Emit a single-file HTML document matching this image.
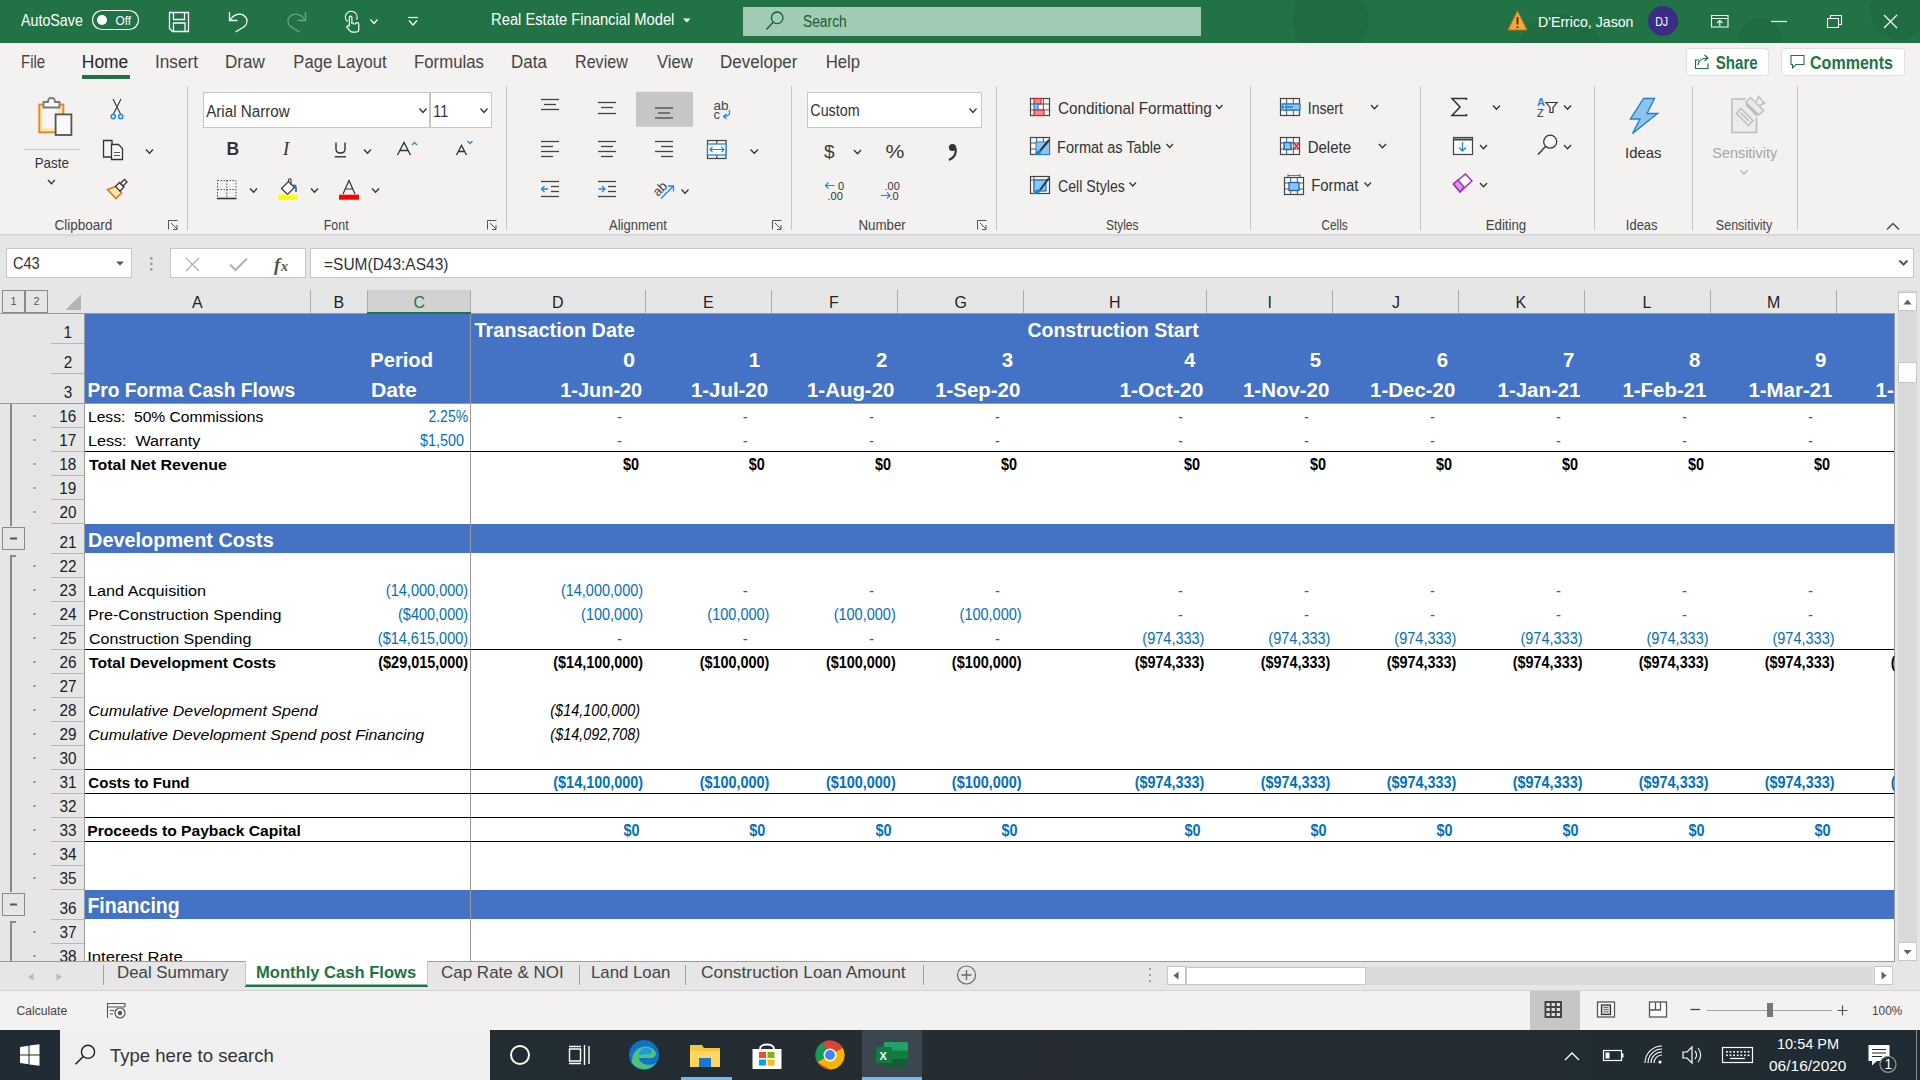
<!DOCTYPE html>
<html><head><meta charset="utf-8"><style>
*{margin:0;padding:0;box-sizing:border-box}
html,body{width:1920px;height:1080px;overflow:hidden;background:#f3f2f1;font-family:"Liberation Sans",sans-serif}
.a{position:absolute}
svg.txt{position:absolute;left:0;top:0;font-family:"Liberation Sans",sans-serif}
svg.txt text{white-space:pre}
svg.ic{position:absolute;left:0;top:0}
</style></head>
<body>
<div class="a" style="left:0px;top:0px;width:1920px;height:43px;background:#217346;"></div>
<div class="a" style="left:743px;top:7px;width:458px;height:29px;background:#a0ccb3;"></div>
<div class="a" style="left:1647.5px;top:6px;width:30px;height:30px;background:#3a2d86;border-radius:50%"></div>
<div class="a" style="left:0px;top:43px;width:1920px;height:191px;background:#f3f2f1;"></div>
<div class="a" style="left:82px;top:75px;width:48px;height:4px;background:#217346;"></div>
<div class="a" style="left:1685.5px;top:47.5px;width:83.5px;height:28.5px;background:#ffffff;border:1px solid #e1dfdd;border-radius:4px"></div>
<div class="a" style="left:1780.5px;top:47.5px;width:124px;height:28.5px;background:#ffffff;border:1px solid #e1dfdd;border-radius:4px"></div>
<div class="a" style="left:0px;top:234px;width:1920px;height:56px;background:#e6e6e6;"></div>
<div class="a" style="left:0px;top:234px;width:1920px;height:3px;background:linear-gradient(#d2d2d2,#e6e6e6);"></div>
<div class="a" style="left:6px;top:248px;width:126px;height:30px;background:#ffffff;border:1px solid #c6c6c6"></div>
<div class="a" style="left:170px;top:248px;width:136px;height:30px;background:#ffffff;border:1px solid #c6c6c6"></div>
<div class="a" style="left:310px;top:248px;width:1604px;height:30px;background:#ffffff;border:1px solid #c6c6c6"></div>
<div class="a" style="left:0px;top:290px;width:1895px;height:24px;background:#e6e6e6;"></div>
<div class="a" style="left:367px;top:290px;width:104px;height:24px;background:#d2d2d2;"></div>
<div class="a" style="left:0px;top:313px;width:85px;height:648px;background:#e6e6e6;"></div>
<div class="a" style="left:85px;top:314px;width:1810px;height:647px;background:#ffffff;"></div>
<div class="a" style="left:85px;top:314px;width:1810px;height:89px;background:#4472c4;"></div>
<div class="a" style="left:85px;top:524px;width:1810px;height:29px;background:#4472c4;"></div>
<div class="a" style="left:85px;top:890px;width:1810px;height:29px;background:#4472c4;"></div>
<div class="a" style="left:1895px;top:290px;width:25px;height:671px;background:#e6e6e6;"></div>
<div class="a" style="left:1898px;top:290px;width:19px;height:671px;background:#dadada;"></div>
<div class="a" style="left:0px;top:961px;width:1920px;height:29px;background:#e6e6e6;"></div>
<div class="a" style="left:0px;top:990px;width:1920px;height:40px;background:#f3f2f1;"></div>
<div class="a" style="left:0px;top:990px;width:1920px;height:1px;background:#d4d4d4;"></div>
<div class="a" style="left:1530px;top:991px;width:50px;height:39px;background:#c8c6c4;"></div>
<div class="a" style="left:0px;top:1030px;width:1920px;height:50px;background:linear-gradient(90deg,#1f2c35,#262c32 55%,#1f2b33);"></div>
<div class="a" style="left:60px;top:1030px;width:430px;height:50px;background:#f0f0f0;"></div>
<div class="a" style="left:862px;top:1030px;width:60px;height:50px;background:#3b4750;"></div>
<div class="a" style="left:310px;top:290px;width:1px;height:23px;background:#ababab;"></div>
<div class="a" style="left:367px;top:290px;width:1px;height:23px;background:#ababab;"></div>
<div class="a" style="left:470px;top:290px;width:1px;height:23px;background:#ababab;"></div>
<div class="a" style="left:645px;top:290px;width:1px;height:23px;background:#ababab;"></div>
<div class="a" style="left:771px;top:290px;width:1px;height:23px;background:#ababab;"></div>
<div class="a" style="left:897px;top:290px;width:1px;height:23px;background:#ababab;"></div>
<div class="a" style="left:1023px;top:290px;width:1px;height:23px;background:#ababab;"></div>
<div class="a" style="left:1206px;top:290px;width:1px;height:23px;background:#ababab;"></div>
<div class="a" style="left:1332px;top:290px;width:1px;height:23px;background:#ababab;"></div>
<div class="a" style="left:1458px;top:290px;width:1px;height:23px;background:#ababab;"></div>
<div class="a" style="left:1584px;top:290px;width:1px;height:23px;background:#ababab;"></div>
<div class="a" style="left:1710px;top:290px;width:1px;height:23px;background:#ababab;"></div>
<div class="a" style="left:1836px;top:290px;width:1px;height:23px;background:#ababab;"></div>
<div class="a" style="left:0px;top:313px;width:1895px;height:1px;background:#9b9b9b;"></div>
<div class="a" style="left:367px;top:312px;width:104px;height:2px;background:#217346;"></div>
<div class="a" style="left:51px;top:343px;width:33px;height:1px;background:#b8b8b8;"></div>
<div class="a" style="left:51px;top:373px;width:33px;height:1px;background:#b8b8b8;"></div>
<div class="a" style="left:51px;top:403px;width:33px;height:1px;background:#b8b8b8;"></div>
<div class="a" style="left:51px;top:427px;width:33px;height:1px;background:#b8b8b8;"></div>
<div class="a" style="left:51px;top:451px;width:33px;height:1px;background:#b8b8b8;"></div>
<div class="a" style="left:51px;top:475px;width:33px;height:1px;background:#b8b8b8;"></div>
<div class="a" style="left:51px;top:499px;width:33px;height:1px;background:#b8b8b8;"></div>
<div class="a" style="left:51px;top:523px;width:33px;height:1px;background:#b8b8b8;"></div>
<div class="a" style="left:51px;top:553px;width:33px;height:1px;background:#b8b8b8;"></div>
<div class="a" style="left:51px;top:577px;width:33px;height:1px;background:#b8b8b8;"></div>
<div class="a" style="left:51px;top:601px;width:33px;height:1px;background:#b8b8b8;"></div>
<div class="a" style="left:51px;top:625px;width:33px;height:1px;background:#b8b8b8;"></div>
<div class="a" style="left:51px;top:649px;width:33px;height:1px;background:#b8b8b8;"></div>
<div class="a" style="left:51px;top:673px;width:33px;height:1px;background:#b8b8b8;"></div>
<div class="a" style="left:51px;top:697px;width:33px;height:1px;background:#b8b8b8;"></div>
<div class="a" style="left:51px;top:721px;width:33px;height:1px;background:#b8b8b8;"></div>
<div class="a" style="left:51px;top:745px;width:33px;height:1px;background:#b8b8b8;"></div>
<div class="a" style="left:51px;top:769px;width:33px;height:1px;background:#b8b8b8;"></div>
<div class="a" style="left:51px;top:793px;width:33px;height:1px;background:#b8b8b8;"></div>
<div class="a" style="left:51px;top:817px;width:33px;height:1px;background:#b8b8b8;"></div>
<div class="a" style="left:51px;top:841px;width:33px;height:1px;background:#b8b8b8;"></div>
<div class="a" style="left:51px;top:865px;width:33px;height:1px;background:#b8b8b8;"></div>
<div class="a" style="left:51px;top:889px;width:33px;height:1px;background:#b8b8b8;"></div>
<div class="a" style="left:51px;top:919px;width:33px;height:1px;background:#b8b8b8;"></div>
<div class="a" style="left:51px;top:943px;width:33px;height:1px;background:#b8b8b8;"></div>
<div class="a" style="left:84px;top:313px;width:1px;height:648px;background:#9b9b9b;"></div>
<div class="a" style="left:0px;top:403px;width:1895px;height:1px;background:#9b9b9b;"></div>
<div class="a" style="left:470px;top:314px;width:1px;height:647px;background:#9b9b9b;"></div>
<div class="a" style="left:85px;top:451px;width:1810px;height:1px;background:#000000;"></div>
<div class="a" style="left:85px;top:649px;width:1810px;height:1px;background:#000000;"></div>
<div class="a" style="left:85px;top:769px;width:1810px;height:1px;background:#000000;"></div>
<div class="a" style="left:85px;top:793px;width:1810px;height:1px;background:#000000;"></div>
<div class="a" style="left:85px;top:817px;width:1810px;height:1px;background:#000000;"></div>
<div class="a" style="left:85px;top:841px;width:1810px;height:1px;background:#000000;"></div>
<div class="a" style="left:1894px;top:314px;width:1px;height:647px;background:#9b9b9b;"></div>
<div class="a" style="left:0px;top:961px;width:1895px;height:1px;background:#9b9b9b;"></div>
<svg class="ic" width="1920" height="1080"><clipPath id="tbclip"><rect x="0" y="0" width="1920" height="43"/></clipPath><g clip-path="url(#tbclip)" opacity="0.05" fill="#000"><circle cx="1330" cy="20" r="38"/><circle cx="1560" cy="60" r="45"/><circle cx="1900" cy="10" r="30"/><circle cx="1760" cy="40" r="22"/></g>
<rect x="92.5" y="10.5" width="46" height="19" rx="9.5" fill="none" stroke="#ffffff" stroke-width="1.2"/>
<circle cx="102" cy="20" r="5" fill="#ffffff"/>
<path d="M169.5,12.5 H188.5 V31.5 H172.5 L169.5,28.5 Z M173.5,12.5 V19.5 H184.5 V12.5 M173.5,31.5 V23 H185 V31.5" fill="none" stroke="#ffffff" stroke-width="1.3"/>
<path d="M229.5,12 V20.5 H237.5 M230.5,19.5 C234,14 241,12.5 245,16.5 C248,19.5 247.5,23.5 244.5,26.5 L235.5,32" fill="none" stroke="#ffffff" stroke-width="1.3"/>
<path d="M305.5,12 V20.5 H297.5 M304.5,19.5 C301,14 294,12.5 290,16.5 C287,19.5 287.5,23.5 290.5,26.5 L299.5,32" fill="none" stroke="#ffffff" stroke-opacity="0.35" stroke-width="1.3"/>
<path d="M347.5,21.5 A5.8,5.8 0 1 1 356.5,19.5" fill="none" stroke="#ffffff" stroke-width="1.2"/>
<path d="M349.3,26.5 V17.5 A1.3,1.3 0 0 1 351.9,17.5 V24 M351.9,22.5 V23 M353.5,22.5 V24.5 M355.4,22.8 V24.5 A1.2,1.2 0 0 1 358.8,24 V29.5 C358.8,31.5 357.5,32.2 355,32.2 H353 C351.5,32.2 350.5,31.5 349.5,30.5 L347,27.5 A1,1 0 0 1 349,26.3" fill="none" stroke="#ffffff" stroke-width="1.2"/>
<path d="M370.5,19.5 L374.0,23.5 L377.5,19.5" fill="none" stroke="#ffffff" stroke-width="1.2"/>
<path d="M408,17.5 H418" stroke="#ffffff" stroke-width="1.2"/>
<path d="M409,20.5 L413.0,25.0 L417,20.5" fill="none" stroke="#ffffff" stroke-width="1.2"/>
<path d="M683,18.5 H690.5 L686.75,22.5 Z" fill="#ffffff"/>
<circle cx="777.2" cy="17.8" r="5.8" fill="none" stroke="#185c37" stroke-width="1.3"/><path d="M773.3,22 L766.5,29.5" stroke="#185c37" stroke-width="1.4"/>
<path d="M1517.5,11 L1527,30 H1508 Z" fill="#f4a640" stroke="#c8701a" stroke-width="1"/><path d="M1517.5,17 V24.5" stroke="#3a2a10" stroke-width="1.8"/><circle cx="1517.5" cy="27.2" r="1" fill="#3a2a10"/>
<path d="M1711.5,15.5 H1728 V27 H1711.5 Z M1711.5,18.5 H1728 M1719.75,26 V20.5 M1717,23 L1719.75,20.5 L1722.5,23" fill="none" stroke="#ffffff" stroke-width="1.1"/>
<path d="M1771,21.5 H1787" stroke="#ffffff" stroke-width="1.2"/>
<path d="M1827.5,18.5 H1838.5 V27.5 H1827.5 Z M1830.5,18.5 V15.5 H1841.5 V24.5 H1838.5" fill="none" stroke="#ffffff" stroke-width="1.1"/>
<path d="M1884,15 L1897,28 M1897,15 L1884,28" stroke="#ffffff" stroke-width="1.3"/>
<path d="M1699,60 H1695.5 V68.5 H1708 V63.5" fill="none" stroke="#217346" stroke-width="1.2"/><path d="M1698,65 C1698.5,60 1702,58 1707.5,58 M1704.5,55 L1708,58 L1704.5,61" fill="none" stroke="#217346" stroke-width="1.2"/>
<path d="M1791,55.5 H1804 V64.5 H1796 L1792.5,68 V64.5 H1791 Z" fill="none" stroke="#217346" stroke-width="1.1"/>
<path d="M187.5,86 V230" stroke="#c8c6c4" stroke-width="1"/>
<path d="M506.5,86 V230" stroke="#c8c6c4" stroke-width="1"/>
<path d="M791.5,86 V230" stroke="#c8c6c4" stroke-width="1"/>
<path d="M996.5,86 V230" stroke="#c8c6c4" stroke-width="1"/>
<path d="M1250.5,86 V230" stroke="#c8c6c4" stroke-width="1"/>
<path d="M1420.5,86 V230" stroke="#c8c6c4" stroke-width="1"/>
<path d="M1594.5,86 V230" stroke="#c8c6c4" stroke-width="1"/>
<path d="M1692.5,86 V230" stroke="#c8c6c4" stroke-width="1"/>
<path d="M1797.5,86 V230" stroke="#c8c6c4" stroke-width="1"/>
<path d="M168.5,229.5 V220.5 H177.5 M171,223 L177,229 M177,225 V229.5 H173" fill="none" stroke="#555" stroke-width="1"/>
<path d="M487.5,229.5 V220.5 H496.5 M490,223 L496,229 M496,225 V229.5 H492" fill="none" stroke="#555" stroke-width="1"/>
<path d="M772.5,229.5 V220.5 H781.5 M775,223 L781,229 M781,225 V229.5 H777" fill="none" stroke="#555" stroke-width="1"/>
<path d="M977.5,229.5 V220.5 H986.5 M980,223 L986,229 M986,225 V229.5 H982" fill="none" stroke="#555" stroke-width="1"/>
<path d="M1887,229.5 L1893,223.5 L1899,229.5" fill="none" stroke="#444" stroke-width="1.3"/>
<rect x="39.3" y="104.6" width="24" height="27.7" fill="#fde7b0" stroke="#e88a2a" stroke-width="2"/><rect x="42.5" y="108" width="14" height="20" fill="#f7f7f7"/>
<path d="M43.5,107.5 V102 H48 C48,99 50,98 51.5,98 C53,98 55,99 55,102 H59.5 V107.5 Z" fill="#f7f7f7" stroke="#7a7a7a" stroke-width="1.8"/>
<rect x="55.6" y="114.4" width="15.8" height="20.6" fill="#fafafa" stroke="#555" stroke-width="1.8"/>
<path d="M24,149.5 H80" stroke="#c8c8c8" stroke-width="1"/>
<path d="M48,180 L51.4,183.8 L54.8,180" fill="none" stroke="#333" stroke-width="1.3"/>
<path d="M113,99 L120.5,114 M121,99 L113.5,114" stroke="#333" stroke-width="1.1"/><circle cx="113.3" cy="116.6" r="2.1" fill="none" stroke="#1e88e5" stroke-width="1.5"/><circle cx="120.7" cy="116.6" r="2.1" fill="none" stroke="#1e88e5" stroke-width="1.5"/>
<path d="M112,146 V140.5 H103.5 V157 H111" fill="none" stroke="#333" stroke-width="1.3"/><path d="M111.5,144.5 H118.5 L122.5,148.5 V159.5 H111.5 Z" fill="#fafafa" stroke="#333" stroke-width="1.3"/><path d="M114,152.5 H120 M114,155.5 H120" stroke="#555" stroke-width="1"/>
<path d="M146,149.5 L149.5,153.3 L153,149.5" fill="none" stroke="#333" stroke-width="1.3"/>
<path d="M107.5,189.5 L117,186 L121.5,193 L116,198.5 Z" fill="#fde7b0" stroke="#e07a10" stroke-width="1.6"/><path d="M115.5,186.5 L119.5,182.5 L124,187 L120,191 Z" fill="#fafafa" stroke="#333" stroke-width="1.3"/><path d="M120.5,183.5 L124.5,179.5 L127,182 L123,186 Z" fill="#fafafa" stroke="#333" stroke-width="1.3"/>
<rect x="203.5" y="92.5" width="226" height="35" fill="#fff" stroke="#c6c6c6"/><rect x="430.5" y="92.5" width="61" height="35" fill="#fff" stroke="#c6c6c6"/>
<path d="M419.5,108.5 L423.0,112.5 L426.5,108.5" fill="none" stroke="#333" stroke-width="1.3"/>
<path d="M480.5,108.5 L484.0,112.5 L487.5,108.5" fill="none" stroke="#333" stroke-width="1.3"/>
<text x="226.5" y="155" font-family="Liberation Sans" font-weight="700" font-size="17.5" fill="#333">B</text>
<text x="283" y="155" font-family="Liberation Serif" font-style="italic" font-size="18.5" fill="#333">I</text>
<path d="M336,142.5 V149 C336,151.5 337.5,153 340.5,153 C343.5,153 345,151.5 345,149 V142.5" fill="none" stroke="#333" stroke-width="1.4"/><path d="M334.7,156.8 H346" stroke="#333" stroke-width="1.4"/>
<path d="M364,149.5 L367.5,153.3 L371,149.5" fill="none" stroke="#333" stroke-width="1.3"/>
<path d="M397.5,155 L404,142.5 L410.5,155 M399.7,150.5 H408.3" fill="none" stroke="#333" stroke-width="1.3"/><path d="M412,145 L414.5,142.5 L417,145" fill="none" stroke="#1e88e5" stroke-width="1.3"/>
<path d="M456.5,155 L461.5,145.5 L466.5,155 M458.3,151.5 H464.7" fill="none" stroke="#333" stroke-width="1.3"/><path d="M467.5,141 L470,143.5 L472.5,141" fill="none" stroke="#1e88e5" stroke-width="1.3"/>
<rect x="217.5" y="180.5" width="18.5" height="18" fill="none" stroke="#555" stroke-width="1" stroke-dasharray="1.5,1.5"/><path d="M226.75,180.5 V198 M217.5,189.5 H236" stroke="#555" stroke-width="1" stroke-dasharray="1.5,1.5"/><path d="M217,198.5 H236.5" stroke="#333" stroke-width="1.6"/>
<path d="M250,188.5 L253.5,192.3 L257,188.5" fill="none" stroke="#333" stroke-width="1.3"/>
<path d="M281.5,188.5 L288.5,181.5 L294.5,187.5 L287.5,194.5 Z" fill="#fafafa" stroke="#333" stroke-width="1.2"/><path d="M288.5,181.5 V180 A1.2,1.2 0 0 1 291,180 V185" fill="none" stroke="#333" stroke-width="1.1"/><path d="M292.5,186 C294.5,184.5 296,185.5 296,188 V192" fill="none" stroke="#1565c0" stroke-width="1.6"/>
<rect x="278" y="194.7" width="20" height="5" fill="#ffff00"/>
<path d="M311,188.5 L314.5,192.3 L318,188.5" fill="none" stroke="#333" stroke-width="1.3"/>
<path d="M343,194 L349,180.5 L355,194 M345.2,189 H352.8" fill="none" stroke="#333" stroke-width="1.2"/><rect x="339" y="194.7" width="20" height="5" fill="#ff0000"/>
<path d="M372,188.5 L375.5,192.3 L379,188.5" fill="none" stroke="#333" stroke-width="1.3"/>
<rect x="636" y="91.8" width="57" height="35" fill="#c8c6c4"/>
<path d="M541.0,99.5 H559.0" stroke="#444" stroke-width="1.3"/>
<path d="M544.0,104.5 H556.0" stroke="#444" stroke-width="1.3"/>
<path d="M541.0,109.5 H559.0" stroke="#444" stroke-width="1.3"/>
<path d="M598.0,102.5 H616.0" stroke="#444" stroke-width="1.3"/>
<path d="M601.0,107.5 H613.0" stroke="#444" stroke-width="1.3"/>
<path d="M598.0,113.5 H616.0" stroke="#444" stroke-width="1.3"/>
<path d="M655.0,108 H673.0" stroke="#444" stroke-width="1.3"/>
<path d="M658.0,113 H670.0" stroke="#444" stroke-width="1.3"/>
<path d="M655.0,118 H673.0" stroke="#444" stroke-width="1.3"/>
<path d="M541,141.5 H559" stroke="#444" stroke-width="1.3"/>
<path d="M541,146.5 H553" stroke="#444" stroke-width="1.3"/>
<path d="M541,151.5 H559" stroke="#444" stroke-width="1.3"/>
<path d="M541,156.5 H553" stroke="#444" stroke-width="1.3"/>
<path d="M598.0,141.5 H616.0" stroke="#444" stroke-width="1.3"/>
<path d="M601.0,146.5 H613.0" stroke="#444" stroke-width="1.3"/>
<path d="M598.0,151.5 H616.0" stroke="#444" stroke-width="1.3"/>
<path d="M601.0,156.5 H613.0" stroke="#444" stroke-width="1.3"/>
<path d="M655,141.5 H673" stroke="#444" stroke-width="1.3"/>
<path d="M661,146.5 H673" stroke="#444" stroke-width="1.3"/>
<path d="M655,151.5 H673" stroke="#444" stroke-width="1.3"/>
<path d="M661,156.5 H673" stroke="#444" stroke-width="1.3"/>
<path d="M541,181.5 H559" stroke="#444" stroke-width="1.3"/>
<path d="M551,186.5 H559" stroke="#444" stroke-width="1.3"/>
<path d="M551,191.5 H559" stroke="#444" stroke-width="1.3"/>
<path d="M541,196.5 H559" stroke="#444" stroke-width="1.3"/>
<path d="M598,181.5 H616" stroke="#444" stroke-width="1.3"/>
<path d="M608,186.5 H616" stroke="#444" stroke-width="1.3"/>
<path d="M608,191.5 H616" stroke="#444" stroke-width="1.3"/>
<path d="M598,196.5 H616" stroke="#444" stroke-width="1.3"/>
<path d="M548,189 H541.5 M544.5,186 L541.5,189 L544.5,192" fill="none" stroke="#1e88e5" stroke-width="1.3"/><path d="M598.5,189 H605 M602,186 L605,189 L602,192" fill="none" stroke="#1e88e5" stroke-width="1.3"/>
<text x="713.5" y="109.5" font-family="Liberation Sans" font-size="13.5" fill="#444">ab</text><text x="713.5" y="119" font-family="Liberation Sans" font-size="13" fill="#444">c</text><path d="M729,110 C731,113 729,116.5 724,116.5 M726.5,114 L723.5,116.5 L726.5,119" fill="none" stroke="#1e88e5" stroke-width="1.3"/>
<rect x="707.5" y="140.5" width="18.5" height="18" fill="none" stroke="#444" stroke-width="1.2"/><path d="M716.75,140.5 V144 M716.75,155 V158.5" stroke="#444" stroke-width="1.2"/><rect x="707.5" y="144" width="18.5" height="11" fill="#fff" stroke="#1e88e5" stroke-width="1.3"/><path d="M710,149.5 H724 M712.5,147 L710,149.5 L712.5,152 M721.5,147 L724,149.5 L721.5,152" fill="none" stroke="#1e88e5" stroke-width="1.2"/>
<path d="M750.5,149.5 L754.25,153.3 L758.0,149.5" fill="none" stroke="#333" stroke-width="1.3"/>
<text x="0" y="0" font-family="Liberation Sans" font-size="13" fill="#444" transform="translate(658,197) rotate(-45)">ab</text><path d="M661,198.5 L673,186.5 M668,186 H673.5 V191.5" fill="none" stroke="#1e88e5" stroke-width="1.3"/>
<path d="M681.5,189.5 L685.0,193.3 L688.5,189.5" fill="none" stroke="#333" stroke-width="1.3"/>
<rect x="807.5" y="92.5" width="174" height="35" fill="#fff" stroke="#c6c6c6"/>
<path d="M969.5,108.5 L973.0,112.5 L976.5,108.5" fill="none" stroke="#333" stroke-width="1.3"/>
<text x="824" y="157.5" font-family="Liberation Sans" font-size="19" fill="#3a3a3a">$</text>
<path d="M854,150 L857.5,153.8 L861,150" fill="none" stroke="#333" stroke-width="1.3"/>
<text transform="translate(885.5,158) scale(1.12,1)" font-family="Liberation Sans" font-size="19" fill="#3a3a3a">%</text>
<circle cx="952.5" cy="147.5" r="3.6" fill="#333"/><path d="M955.5,148 C956.5,153 954.5,157.5 949,160" fill="none" stroke="#333" stroke-width="2.2"/>
<text x="838" y="190" font-family="Liberation Sans" font-size="11" fill="#333">0</text><text x="827.5" y="199.5" font-family="Liberation Sans" font-size="11" fill="#333">.00</text><path d="M834.5,185.5 H825.5 M828.5,182.5 L825.5,185.5 L828.5,188.5" fill="none" stroke="#1e88e5" stroke-width="1.2"/>
<text x="884.5" y="190" font-family="Liberation Sans" font-size="11" fill="#333">.00</text><text x="889.5" y="199.5" font-family="Liberation Sans" font-size="11" fill="#333">.0</text><path d="M881,195.5 H890 M887,192.5 L890,195.5 L887,198.5" fill="none" stroke="#1e88e5" stroke-width="1.2"/>
<rect x="1030.5" y="98.5" width="19" height="17" fill="#fafafa" stroke="#444" stroke-width="1.2"/><path d="M1036.6666666666667,98 V116" stroke="#444" stroke-width="0.9"/><path d="M1043.3333333333333,98 V116" stroke="#444" stroke-width="0.9"/><path d="M1030,104.0 H1050" stroke="#444" stroke-width="0.9"/><path d="M1030,110.0 H1050" stroke="#444" stroke-width="0.9"/>
<rect x="1034" y="98.5" width="7" height="5.5" fill="#f08a94" stroke="#e02030" stroke-width="1.2"/><rect x="1034" y="104" width="4" height="6" fill="#8cc4f0" stroke="#1e7fd4" stroke-width="1.2"/><rect x="1034" y="110" width="10" height="5.5" fill="#f08a94" stroke="#e02030" stroke-width="1.2"/>
<path d="M1216,105 L1219.25,108.5 L1222.5,105" fill="none" stroke="#333" stroke-width="1.2"/>
<rect x="1030.5" y="137.5" width="19" height="17" fill="#fafafa" stroke="#444" stroke-width="1.2"/><path d="M1036.6666666666667,137 V155" stroke="#444" stroke-width="0.9"/><path d="M1043.3333333333333,137 V155" stroke="#444" stroke-width="0.9"/><path d="M1030,143.0 H1050" stroke="#444" stroke-width="0.9"/><path d="M1030,149.0 H1050" stroke="#444" stroke-width="0.9"/>
<rect x="1036" y="142" width="13.5" height="12.5" fill="#8cc4f0" stroke="#1e7fd4" stroke-width="1"/><path d="M1049,140 L1040,151" stroke="#333" stroke-width="2"/><path d="M1040,150 C1037,150 1036,153 1034,155 C1038,155 1041,154 1041.5,151 Z" fill="#1e7fd4"/>
<path d="M1166.5,144 L1169.75,147.5 L1173.0,144" fill="none" stroke="#333" stroke-width="1.2"/>
<rect x="1030.5" y="176.5" width="19" height="17" fill="#fafafa" stroke="#444" stroke-width="1.2"/>
<path d="M1030,180 H1050 M1034,176 V194" stroke="#444" stroke-width="0.9"/><rect x="1034" y="180" width="12" height="11" fill="#8cc4f0" stroke="#1e7fd4" stroke-width="1.3"/><path d="M1049,178 L1040,190" stroke="#333" stroke-width="2"/><path d="M1040,189 C1037,189 1035,192 1033,194 C1037,194 1040.5,193 1041,190 Z" fill="#1e7fd4"/>
<path d="M1129.5,182.5 L1132.75,186.0 L1136.0,182.5" fill="none" stroke="#333" stroke-width="1.2"/>
<rect x="1280.5" y="98.5" width="19" height="17" fill="#fafafa" stroke="#444" stroke-width="1.2"/><path d="M1286.6666666666667,98 V116" stroke="#444" stroke-width="0.9"/><path d="M1293.3333333333333,98 V116" stroke="#444" stroke-width="0.9"/><path d="M1280,104.0 H1300" stroke="#444" stroke-width="0.9"/><path d="M1280,110.0 H1300" stroke="#444" stroke-width="0.9"/>
<rect x="1286" y="104" width="14" height="6" fill="#8cc4f0" stroke="#1e7fd4" stroke-width="1.3"/><path d="M1281,107 H1293 M1285,103 L1281,107 L1285,111" fill="none" stroke="#1e88e5" stroke-width="1.4"/>
<path d="M1371,105 L1374.5,108.8 L1378,105" fill="none" stroke="#333" stroke-width="1.3"/>
<rect x="1280.5" y="137.5" width="19" height="17" fill="#fafafa" stroke="#444" stroke-width="1.2"/><path d="M1286.6666666666667,137 V155" stroke="#444" stroke-width="0.9"/><path d="M1293.3333333333333,137 V155" stroke="#444" stroke-width="0.9"/><path d="M1280,143.0 H1300" stroke="#444" stroke-width="0.9"/><path d="M1280,149.0 H1300" stroke="#444" stroke-width="0.9"/>
<rect x="1284" y="142.5" width="7" height="7" fill="#8cc4f0" stroke="#1565c0" stroke-width="1.4"/><path d="M1293.5,142.5 L1299.5,149.5 M1299.5,142.5 L1293.5,149.5" stroke="#e02030" stroke-width="1.4"/>
<path d="M1379,144 L1382.5,147.8 L1386,144" fill="none" stroke="#333" stroke-width="1.3"/>
<rect x="1284.5" y="177.5" width="19" height="17" fill="#fafafa" stroke="#444" stroke-width="1.2"/><path d="M1290.6666666666667,177 V195" stroke="#444" stroke-width="0.9"/><path d="M1297.3333333333333,177 V195" stroke="#444" stroke-width="0.9"/><path d="M1284,183.0 H1304" stroke="#444" stroke-width="0.9"/><path d="M1284,189.0 H1304" stroke="#444" stroke-width="0.9"/>
<rect x="1289" y="182.5" width="10" height="8" fill="#8cc4f0" stroke="#1565c0" stroke-width="1.3"/><path d="M1288,175.5 H1300 M1288,174 V177 M1300,174 V177" fill="none" stroke="#1e88e5" stroke-width="1.2"/>
<path d="M1364.5,182.5 L1367.75,186.0 L1371.0,182.5" fill="none" stroke="#333" stroke-width="1.2"/>
<path d="M1466.5,100 V98.5 H1452 L1460,107 L1452,115.5 H1466.5 V114" fill="none" stroke="#333" stroke-width="1.5"/>
<path d="M1493,105.5 L1496.5,109.3 L1500,105.5" fill="none" stroke="#333" stroke-width="1.3"/>
<text x="1537" y="105.5" font-family="Liberation Sans" font-weight="700" font-size="11" fill="#1e88e5">A</text><text x="1537" y="116.5" font-family="Liberation Sans" font-size="11" fill="#333">Z</text><path d="M1546,102.5 H1557 L1553,107.5 V112.5 H1550 V107.5 Z" fill="#fafafa" stroke="#333" stroke-width="1.2"/>
<path d="M1564,105.5 L1567.5,109.3 L1571,105.5" fill="none" stroke="#333" stroke-width="1.3"/>
<rect x="1453.5" y="137.5" width="19" height="17" fill="#fafafa" stroke="#444" stroke-width="1.2"/><path d="M1453.5,139.5 H1472.5" stroke="#444" stroke-width="2"/><path d="M1462.5,142 V151 M1459,147.5 L1462.5,151 L1466,147.5" fill="none" stroke="#1e88e5" stroke-width="1.3"/>
<path d="M1480,145 L1483.5,148.8 L1487,145" fill="none" stroke="#333" stroke-width="1.3"/>
<circle cx="1550.2" cy="141.7" r="6.5" fill="#fafafa" stroke="#333" stroke-width="1.3"/><path d="M1545.5,146.5 L1538,154.5" stroke="#333" stroke-width="1.3"/>
<path d="M1564,145 L1567.5,148.8 L1571,145" fill="none" stroke="#333" stroke-width="1.3"/>
<path d="M1453.5,184 L1465.5,174 L1472,181 L1460,192 Z" fill="#fafafa" stroke="#9b2fae" stroke-width="1.4"/><path d="M1453.5,184 L1458,180 L1464,187 L1460,192 Z" fill="#d79ce0" stroke="#9b2fae" stroke-width="1.4"/>
<path d="M1480,183 L1483.5,186.8 L1487,183" fill="none" stroke="#333" stroke-width="1.3"/>
<path d="M1643.5,98.5 H1654.5 L1647,113.5 H1657.5 L1632.5,133.5 L1640,119 H1630.5 Z" fill="#8cc4f0" stroke="#1e7fd4" stroke-width="1.4" stroke-linejoin="miter"/>
<path d="M1745.5,99 H1732 V132.5 H1756.5 V117.5" fill="#ececec" stroke="#bdbdbd" stroke-width="1.6"/>
<path d="M1736.5,113.5 L1741,108.5 L1753,120.5 L1748.5,125.5 Z" fill="#ececec" stroke="#bdbdbd" stroke-width="1.5"/><path d="M1740.5,112.5 L1749,121" stroke="#bdbdbd" stroke-width="1.5"/>
<path d="M1746,102.5 L1750.5,97.5 L1763.5,110.5 L1759,115 Z" fill="#ececec" stroke="#bdbdbd" stroke-width="1.5"/><path d="M1746.5,104.5 L1757.5,115.5" stroke="#bdbdbd" stroke-width="2.5"/><path d="M1756,102.5 L1758.5,96.5 L1764.5,103 L1759.5,105.5" fill="#ececec" stroke="#bdbdbd" stroke-width="1.4"/>
<path d="M1740.5,170.5 L1744.0,174.0 L1747.5,170.5" fill="none" stroke="#b0b0b0" stroke-width="1.2"/>
<path d="M116,261.5 H124 L120,265.5 Z" fill="#555"/>
<rect x="150" y="257" width="2.5" height="2.5" fill="#a0a0a0"/>
<rect x="150" y="262.5" width="2.5" height="2.5" fill="#a0a0a0"/>
<rect x="150" y="268" width="2.5" height="2.5" fill="#a0a0a0"/>
<path d="M186,258 L199,271 M199,258 L186,271" stroke="#b0b0b0" stroke-width="1.3"/>
<path d="M230,264.5 L235.5,270 L247,258.5" fill="none" stroke="#b0b0b0" stroke-width="2"/>
<text x="274" y="271" font-family="Liberation Serif" font-style="italic" font-weight="700" font-size="19" fill="#555">f</text><text x="281" y="271" font-family="Liberation Serif" font-style="italic" font-weight="700" font-size="14" fill="#555">x</text>
<path d="M1899.5,260.5 L1903.5,264.5 L1907.5,260.5" fill="none" stroke="#555" stroke-width="2"/>
<rect x="2.5" y="290.5" width="22" height="22" fill="none" stroke="#8a8a8a"/><rect x="25.5" y="290.5" width="22" height="22" fill="none" stroke="#8a8a8a"/>
<path d="M81,294.5 V310 H65.5 Z" fill="#b4b4b4"/>
<path d="M11,404 V526" stroke="#8a8a8a" stroke-width="2"/><rect x="2.5" y="527.5" width="22" height="22" fill="#e6e6e6" stroke="#8a8a8a"/><path d="M10,538.5 H17" stroke="#555" stroke-width="2"/>
<path d="M16,556 H11 V892" fill="none" stroke="#8a8a8a" stroke-width="2"/><rect x="2.5" y="893.5" width="22" height="22" fill="#e6e6e6" stroke="#8a8a8a"/><path d="M10,904.5 H17" stroke="#555" stroke-width="2"/>
<path d="M16,922 H11 V961" fill="none" stroke="#8a8a8a" stroke-width="2"/>
<rect x="33.5" y="415" width="2" height="2" fill="#8a8a8a"/>
<rect x="33.5" y="439" width="2" height="2" fill="#8a8a8a"/>
<rect x="33.5" y="463" width="2" height="2" fill="#8a8a8a"/>
<rect x="33.5" y="487" width="2" height="2" fill="#8a8a8a"/>
<rect x="33.5" y="511" width="2" height="2" fill="#8a8a8a"/>
<rect x="33.5" y="565" width="2" height="2" fill="#8a8a8a"/>
<rect x="33.5" y="589" width="2" height="2" fill="#8a8a8a"/>
<rect x="33.5" y="613" width="2" height="2" fill="#8a8a8a"/>
<rect x="33.5" y="637" width="2" height="2" fill="#8a8a8a"/>
<rect x="33.5" y="661" width="2" height="2" fill="#8a8a8a"/>
<rect x="33.5" y="685" width="2" height="2" fill="#8a8a8a"/>
<rect x="33.5" y="709" width="2" height="2" fill="#8a8a8a"/>
<rect x="33.5" y="733" width="2" height="2" fill="#8a8a8a"/>
<rect x="33.5" y="757" width="2" height="2" fill="#8a8a8a"/>
<rect x="33.5" y="781" width="2" height="2" fill="#8a8a8a"/>
<rect x="33.5" y="805" width="2" height="2" fill="#8a8a8a"/>
<rect x="33.5" y="829" width="2" height="2" fill="#8a8a8a"/>
<rect x="33.5" y="853" width="2" height="2" fill="#8a8a8a"/>
<rect x="33.5" y="877" width="2" height="2" fill="#8a8a8a"/>
<rect x="33.5" y="931" width="2" height="2" fill="#8a8a8a"/>
<rect x="33.5" y="955" width="2" height="2" fill="#8a8a8a"/>
<rect x="1898.5" y="292.5" width="18" height="18" fill="#fff" stroke="#c6c6c6"/><path d="M1903.5,304.5 H1911.5 L1907.5,299.5 Z" fill="#606060"/>
<rect x="1898.5" y="362.5" width="18" height="20" fill="#fff" stroke="#c6c6c6"/>
<rect x="1898.5" y="942.5" width="18" height="18" fill="#fff" stroke="#c6c6c6"/><path d="M1903.5,950 H1911.5 L1907.5,954.5 Z" fill="#606060"/>
<path d="M28,977 L33.5,973.5 V980.5 Z" fill="#b8b8b8"/><path d="M62,977 L56.5,973.5 V980.5 Z" fill="#b8b8b8"/>
<path d="M103.5,965 V985" stroke="#a0a0a0"/>
<path d="M579.5,965 V985" stroke="#a0a0a0"/>
<path d="M685.5,965 V985" stroke="#a0a0a0"/>
<path d="M923.5,965 V985" stroke="#a0a0a0"/>
<rect x="245" y="961" width="183" height="26" fill="#ffffff"/><rect x="245" y="984.5" width="183" height="2.5" fill="#217346"/><path d="M245.5,961 V986 M427.5,961 V986" stroke="#c6c6c6"/>
<circle cx="966.5" cy="975" r="9" fill="none" stroke="#666" stroke-width="1.2"/><path d="M961.5,975 H971.5 M966.5,970 V980" stroke="#666" stroke-width="1.3"/>
<rect x="1149" y="968" width="2" height="2" fill="#a0a0a0"/>
<rect x="1149" y="974" width="2" height="2" fill="#a0a0a0"/>
<rect x="1149" y="980" width="2" height="2" fill="#a0a0a0"/>
<rect x="1167" y="966.5" width="706" height="18.5" fill="#dadada"/>
<rect x="1167.5" y="966.5" width="18" height="18" fill="#fff" stroke="#c6c6c6"/><path d="M1173.5,975.5 L1178.5,971.5 V979.5 Z" fill="#606060"/>
<rect x="1186.5" y="967.5" width="179" height="17" fill="#fff" stroke="#c6c6c6"/>
<rect x="1874.5" y="966.5" width="18" height="18" fill="#fff" stroke="#c6c6c6"/><path d="M1886.5,975.5 L1881.5,971.5 V979.5 Z" fill="#606060"/>
<path d="M107.5,1018 V1003.5 H125 V1007 M107.5,1007 H125 M110,1010.5 H114 M110,1014 H113" fill="none" stroke="#555" stroke-width="1.1"/><circle cx="120" cy="1013" r="5" fill="#f3f2f1" stroke="#555" stroke-width="1.2"/><circle cx="120" cy="1013" r="2.2" fill="#555"/>
<rect x="1545.5" y="1002" width="15.5" height="15" fill="#e0e0e0" stroke="#444" stroke-width="2"/><path d="M1550.7,1002 V1017 M1555.8,1002 V1017 M1545.5,1007 H1561 M1545.5,1012 H1561" stroke="#444" stroke-width="1.8"/>
<rect x="1597.5" y="1002" width="17" height="15" fill="#fff" stroke="#555" stroke-width="1.3"/><rect x="1601.5" y="1005" width="9" height="9.5" fill="#d8d8d8" stroke="#333" stroke-width="1.3"/><path d="M1603.5,1007.5 H1608.5 M1603.5,1009.5 H1608.5 M1603.5,1011.8 H1608.5" stroke="#555" stroke-width="0.8"/>
<rect x="1649.5" y="1002" width="17" height="15" fill="#fff" stroke="#555" stroke-width="1.3"/><path d="M1655.5,1002 V1010 H1649.5 M1660.5,1002 V1010 H1655.5" fill="none" stroke="#555" stroke-width="1.3"/>
<path d="M1690.5,1009.5 H1700" stroke="#444" stroke-width="1.3"/><path d="M1707,1010.5 H1832" stroke="#a0a0a0" stroke-width="1"/><rect x="1767" y="1003" width="6" height="14" fill="#777"/><path d="M1837.5,1010.5 H1847.5 M1842.5,1005.5 V1015.5" stroke="#555" stroke-width="1.2"/>
<path d="M20,1047 L28.5,1045.8 V1054.5 H20 Z M29.5,1045.6 L39.5,1044.2 V1054.5 H29.5 Z M20,1055.5 H28.5 V1064.2 L20,1063 Z M29.5,1055.5 H39.5 V1065.8 L29.5,1064.4 Z" fill="#fff"/>
<circle cx="88" cy="1051.8" r="6.6" fill="none" stroke="#222" stroke-width="1.4"/><path d="M83.3,1056.5 L75.5,1064.3" stroke="#222" stroke-width="1.6"/>
<circle cx="520" cy="1055" r="9" fill="none" stroke="#fff" stroke-width="2"/>
<path d="M569,1046.5 H581 M569,1063.5 H581 M569.5,1049 V1061 H580.5 V1049 Z M584.5,1045 V1065 M589,1046 V1064" fill="none" stroke="#fff" stroke-width="1.4"/>
<circle cx="644" cy="1055" r="15" fill="#0c73c8"/><path d="M632,1060 C633,1048 645,1043 653,1049 C657,1052 657,1057 652,1058 H639 C640,1064 648,1067 656,1063 C652,1069 643,1071 637,1067 C633,1065 631,1062 632,1060 Z" fill="#5fd06a" opacity="0.85"/><path d="M639,1055 C639,1049 645,1046 650,1049 C653,1051 652,1054 649,1054 Z" fill="#1a9ae0"/>
<path d="M690,1045 H702 L704,1048 H720 V1067 H690 Z" fill="#f4c542"/><path d="M690,1051 H720 V1067 H690 Z" fill="#ffd760"/><rect x="699" y="1058" width="12" height="9" fill="#1976d2"/><rect x="681" y="1077" width="51" height="3" fill="#76b9ed"/>
<path d="M752.5,1049 H781.5 V1069 H752.5 Z" fill="#fff"/><path d="M760,1049 C760,1043 774,1043 774,1049" fill="none" stroke="#fff" stroke-width="2"/><rect x="759" y="1052" width="7" height="6" fill="#f25022"/><rect x="767.5" y="1052" width="7" height="6" fill="#7fba00"/><rect x="759" y="1059.5" width="7" height="6" fill="#00a4ef"/><rect x="767.5" y="1059.5" width="7" height="6" fill="#ffb900"/>
<circle cx="830" cy="1055" r="14.5" fill="#db4437"/><path d="M830,1055 L817.5,1062.3 A14.5,14.5 0 0 1 822.75,1042.4 Z" fill="#0f9d58"/><path d="M830,1055 L842.5,1047.7 A14.5,14.5 0 0 1 830,1069.5 L817.5,1062.3 Z" fill="#f4b400"/><path d="M830,1055 L842.5,1047.7 A14.5,14.5 0 0 0 822.75,1042.4 Z" fill="#db4437"/><circle cx="830" cy="1055" r="6.5" fill="#fff"/><circle cx="830" cy="1055" r="5" fill="#4285f4"/>
<rect x="884" y="1042" width="24" height="26" rx="1.5" fill="#21a366"/><rect x="884" y="1050.5" width="24" height="8.5" fill="#107c41"/><rect x="884" y="1059" width="24" height="9" fill="#185c37"/><rect x="876" y="1047" width="16" height="16" rx="1.5" fill="#107c41"/><text x="879.5" y="1059.5" font-family="Liberation Sans" font-weight="700" font-size="11" fill="#fff">X</text><rect x="862" y="1077" width="60" height="3" fill="#76b9ed"/>
<path d="M1565,1060 L1572,1053 L1579,1060" fill="none" stroke="#fff" stroke-width="1.4"/>
<rect x="1603.5" y="1050.5" width="18" height="10" fill="none" stroke="#fff" stroke-width="1.2"/><rect x="1621.5" y="1053.5" width="2" height="4" fill="#fff"/><rect x="1605.5" y="1052.5" width="4" height="6" fill="#fff"/>
<path d="M1645,1063 A17,17 0 0 1 1662,1046 M1648,1063 A14,14 0 0 1 1662,1049 M1651,1063 A11,11 0 0 1 1662,1052 M1654,1063 A8,8 0 0 1 1662,1055" fill="none" stroke="#fff" stroke-width="1.1"/><circle cx="1660" cy="1062" r="1.6" fill="#fff"/>
<path d="M1683,1052 H1687 L1692,1047 V1063 L1687,1058 H1683 Z" fill="none" stroke="#fff" stroke-width="1.2"/><path d="M1695,1051 C1697,1053 1697,1057 1695,1059 M1698,1048 C1701.5,1052 1701.5,1058 1698,1062" fill="none" stroke="#fff" stroke-width="1.1"/>
<rect x="1722.5" y="1047.5" width="30" height="15" fill="none" stroke="#fff" stroke-width="1.2"/>
<rect x="1726.0" y="1051" width="1.8" height="1.6" fill="#fff"/>
<rect x="1729.6" y="1051" width="1.8" height="1.6" fill="#fff"/>
<rect x="1733.2" y="1051" width="1.8" height="1.6" fill="#fff"/>
<rect x="1736.8" y="1051" width="1.8" height="1.6" fill="#fff"/>
<rect x="1740.4" y="1051" width="1.8" height="1.6" fill="#fff"/>
<rect x="1744.0" y="1051" width="1.8" height="1.6" fill="#fff"/>
<rect x="1747.6" y="1051" width="1.8" height="1.6" fill="#fff"/>
<rect x="1726.0" y="1054.5" width="1.8" height="1.6" fill="#fff"/>
<rect x="1729.6" y="1054.5" width="1.8" height="1.6" fill="#fff"/>
<rect x="1733.2" y="1054.5" width="1.8" height="1.6" fill="#fff"/>
<rect x="1736.8" y="1054.5" width="1.8" height="1.6" fill="#fff"/>
<rect x="1740.4" y="1054.5" width="1.8" height="1.6" fill="#fff"/>
<rect x="1744.0" y="1054.5" width="1.8" height="1.6" fill="#fff"/>
<rect x="1747.6" y="1054.5" width="1.8" height="1.6" fill="#fff"/>
<path d="M1730,1058.5 H1745" stroke="#fff" stroke-width="1.3"/>
<path d="M1868.5,1045 H1889.5 V1061 H1877 L1872,1065.5 V1061 H1868.5 Z" fill="#fff"/><path d="M1872,1049.5 H1886 M1872,1053 H1886 M1872,1056.5 H1882" stroke="#1e2b34" stroke-width="1.1"/><circle cx="1888" cy="1064.3" r="8" fill="#1e2b34" stroke="#8a9196" stroke-width="1.3"/>
<path d="M1916.5,1030 V1080" stroke="#8a9196" stroke-width="1"/></svg>
<svg class="txt" width="1920" height="1080" viewBox="0 0 1920 1080"><defs><clipPath id="clipN"><rect x="1836" y="300" width="58.5" height="600"/></clipPath><clipPath id="clipRH"><rect x="0" y="314" width="85" height="647"/></clipPath><clipPath id="clipGrid"><rect x="85" y="314" width="1810" height="647"/></clipPath></defs><g><text transform="translate(21.00,26.00) scale(0.8953,1)" font-size="15.94" font-weight="400" fill="#ffffff">AutoSave</text></g>
<g><text transform="translate(115.60,25.00) scale(0.9075,1)" font-size="13.04" font-weight="400" fill="#ffffff">Off</text></g>
<g><text transform="translate(491.06,25.00) scale(0.9417,1)" font-size="15.65" font-weight="400" fill="#ffffff">Real Estate Financial Model</text></g>
<g><text transform="translate(803.00,26.90) scale(0.8735,1)" font-size="15.80" font-weight="400" fill="#185c37">Search</text></g>
<g><text transform="translate(1538.08,27.30) scale(0.9206,1)" font-size="15.36" font-weight="400" fill="#ffffff">D&#x27;Errico, Jason</text></g>
<g><text transform="translate(1655.14,26.00) scale(0.8645,1)" font-size="12.32" font-weight="400" fill="#ffffff">DJ</text></g>
<g><text transform="translate(21.01,68.00) scale(0.8446,1)" font-size="17.68" font-weight="400" fill="#444444">File</text></g>
<g><text transform="translate(155.03,68.00) scale(0.9703,1)" font-size="17.68" font-weight="400" fill="#444444">Insert</text></g>
<g><text transform="translate(225.04,68.00) scale(0.9636,1)" font-size="17.68" font-weight="400" fill="#444444">Draw</text></g>
<g><text transform="translate(293.36,68.00) scale(0.9397,1)" font-size="17.68" font-weight="400" fill="#444444">Page Layout</text></g>
<g><text transform="translate(414.05,68.00) scale(0.9477,1)" font-size="17.68" font-weight="400" fill="#444444">Formulas</text></g>
<g><text transform="translate(511.04,68.00) scale(0.9589,1)" font-size="17.68" font-weight="400" fill="#444444">Data</text></g>
<g><text transform="translate(575.09,68.00) scale(0.9094,1)" font-size="17.68" font-weight="400" fill="#444444">Review</text></g>
<g><text transform="translate(657.00,68.00) scale(0.9419,1)" font-size="17.68" font-weight="400" fill="#444444">View</text></g>
<g><text transform="translate(720.04,68.00) scale(0.9603,1)" font-size="17.68" font-weight="400" fill="#444444">Developer</text></g>
<g><text transform="translate(825.65,68.00) scale(0.9489,1)" font-size="17.68" font-weight="400" fill="#444444">Help</text></g>
<g><text transform="translate(81.81,68.00) scale(0.9868,1)" font-size="17.68" font-weight="400" fill="#262626">Home</text></g>
<g><text transform="translate(1715.80,68.70) scale(0.8436,1)" font-size="17.86" font-weight="700" fill="#217346">Share</text></g>
<g><text transform="translate(1810.00,68.70) scale(0.8994,1)" font-size="17.86" font-weight="700" fill="#217346">Comments</text></g>
<g><text transform="translate(34.70,167.60) scale(0.8961,1)" font-size="14.93" font-weight="400" fill="#333333">Paste</text></g>
<g><text transform="translate(54.40,230.00) scale(0.9747,1)" font-size="13.91" font-weight="400" fill="#444444">Clipboard</text></g>
<g><text transform="translate(206.20,116.50) scale(0.9271,1)" font-size="16.38" font-weight="400" fill="#333333">Arial Narrow</text></g>
<g><text transform="translate(433.32,116.50) scale(0.8751,1)" font-size="16.38" font-weight="400" fill="#333333">11</text></g>
<g><text transform="translate(323.81,230.00) scale(0.8901,1)" font-size="13.91" font-weight="400" fill="#444444">Font</text></g>
<g><text transform="translate(609.00,230.00) scale(0.9359,1)" font-size="13.91" font-weight="400" fill="#444444">Alignment</text></g>
<g><text transform="translate(810.30,116.30) scale(0.8987,1)" font-size="15.94" font-weight="400" fill="#333333">Custom</text></g>
<g><text transform="translate(858.44,230.00) scale(0.9585,1)" font-size="13.91" font-weight="400" fill="#444444">Number</text></g>
<g><text transform="translate(1058.00,114.00) scale(0.9594,1)" font-size="15.94" font-weight="400" fill="#333333">Conditional Formatting</text></g>
<g><text transform="translate(1057.09,153.00) scale(0.9127,1)" font-size="15.94" font-weight="400" fill="#333333">Format as Table</text></g>
<g><text transform="translate(1058.00,191.90) scale(0.8896,1)" font-size="15.94" font-weight="400" fill="#333333">Cell Styles</text></g>
<g><text transform="translate(1106.00,230.00) scale(0.8545,1)" font-size="13.91" font-weight="400" fill="#444444">Styles</text></g>
<g><text transform="translate(1307.71,114.10) scale(0.8851,1)" font-size="15.94" font-weight="400" fill="#333333">Insert</text></g>
<g><text transform="translate(1307.66,152.50) scale(0.9424,1)" font-size="15.94" font-weight="400" fill="#333333">Delete</text></g>
<g><text transform="translate(1311.16,191.20) scale(0.9351,1)" font-size="15.94" font-weight="400" fill="#333333">Format</text></g>
<g><text transform="translate(1321.50,230.00) scale(0.8464,1)" font-size="13.91" font-weight="400" fill="#444444">Cells</text></g>
<g><text transform="translate(1485.64,230.00) scale(0.9562,1)" font-size="13.91" font-weight="400" fill="#444444">Editing</text></g>
<g><text transform="translate(1625.11,158.20) scale(0.9882,1)" font-size="15.07" font-weight="400" fill="#333333">Ideas</text></g>
<g><text transform="translate(1625.87,230.00) scale(0.9285,1)" font-size="13.91" font-weight="400" fill="#444444">Ideas</text></g>
<g><text transform="translate(1712.30,158.20) scale(0.9565,1)" font-size="15.07" font-weight="400" fill="#a6a6a6">Sensitivity</text></g>
<g><text transform="translate(1715.80,230.00) scale(0.9019,1)" font-size="13.91" font-weight="400" fill="#444444">Sensitivity</text></g>
<g><text transform="translate(13.00,269.00) scale(0.9312,1)" font-size="15.65" font-weight="400" fill="#333333">C43</text></g>
<g><text transform="translate(324.00,269.50) scale(0.9550,1)" font-size="16.23" font-weight="400" fill="#333333">=SUM(D43:AS43)</text></g>
<g><text transform="translate(192.00,308.00) scale(1.0000,1)" font-size="15.94" font-weight="400" fill="#222222">A</text></g>
<g><text transform="translate(333.50,308.00) scale(1.0000,1)" font-size="15.94" font-weight="400" fill="#222222">B</text></g>
<g><text transform="translate(413.50,308.00) scale(1.0000,1)" font-size="15.94" font-weight="400" fill="#217346">C</text></g>
<g><text transform="translate(552.00,308.00) scale(1.0000,1)" font-size="15.94" font-weight="400" fill="#222222">D</text></g>
<g><text transform="translate(703.00,308.00) scale(1.0000,1)" font-size="15.94" font-weight="400" fill="#222222">E</text></g>
<g><text transform="translate(829.00,308.00) scale(1.0000,1)" font-size="15.94" font-weight="400" fill="#222222">F</text></g>
<g><text transform="translate(954.50,308.00) scale(1.0000,1)" font-size="15.94" font-weight="400" fill="#222222">G</text></g>
<g><text transform="translate(1109.00,308.00) scale(1.0000,1)" font-size="15.94" font-weight="400" fill="#222222">H</text></g>
<g><text transform="translate(1267.50,308.00) scale(1.0000,1)" font-size="15.94" font-weight="400" fill="#222222">I</text></g>
<g><text transform="translate(1392.00,308.00) scale(1.0000,1)" font-size="15.94" font-weight="400" fill="#222222">J</text></g>
<g><text transform="translate(1515.50,308.00) scale(1.0000,1)" font-size="15.94" font-weight="400" fill="#222222">K</text></g>
<g><text transform="translate(1642.50,308.00) scale(1.0000,1)" font-size="15.94" font-weight="400" fill="#222222">L</text></g>
<g><text transform="translate(1767.00,308.00) scale(1.0000,1)" font-size="15.94" font-weight="400" fill="#222222">M</text></g>
<g><text transform="translate(10.50,305.00) scale(1.0000,1)" font-size="10.87" font-weight="400" fill="#555">1</text></g>
<g><text transform="translate(33.50,305.00) scale(1.0000,1)" font-size="10.87" font-weight="400" fill="#555">2</text></g>
<g><text transform="translate(63.40,337.70) scale(0.9200,1)" font-size="16.67" font-weight="400" fill="#222222">1</text></g>
<g><text transform="translate(63.86,367.70) scale(0.9200,1)" font-size="16.67" font-weight="400" fill="#222222">2</text></g>
<g><text transform="translate(63.86,397.70) scale(0.9200,1)" font-size="16.67" font-weight="400" fill="#222222">3</text></g>
<g><text transform="translate(59.14,421.70) scale(0.9200,1)" font-size="16.67" font-weight="400" fill="#222222">16</text></g>
<g><text transform="translate(59.14,445.70) scale(0.9200,1)" font-size="16.67" font-weight="400" fill="#222222">17</text></g>
<g><text transform="translate(59.14,469.70) scale(0.9200,1)" font-size="16.67" font-weight="400" fill="#222222">18</text></g>
<g><text transform="translate(59.14,493.70) scale(0.9200,1)" font-size="16.67" font-weight="400" fill="#222222">19</text></g>
<g><text transform="translate(59.60,517.70) scale(0.9200,1)" font-size="16.67" font-weight="400" fill="#222222">20</text></g>
<g><text transform="translate(59.60,547.70) scale(0.9200,1)" font-size="16.67" font-weight="400" fill="#222222">21</text></g>
<g><text transform="translate(59.60,571.70) scale(0.9200,1)" font-size="16.67" font-weight="400" fill="#222222">22</text></g>
<g><text transform="translate(59.60,595.70) scale(0.9200,1)" font-size="16.67" font-weight="400" fill="#222222">23</text></g>
<g><text transform="translate(59.60,619.70) scale(0.9200,1)" font-size="16.67" font-weight="400" fill="#222222">24</text></g>
<g><text transform="translate(59.60,643.70) scale(0.9200,1)" font-size="16.67" font-weight="400" fill="#222222">25</text></g>
<g><text transform="translate(59.60,667.70) scale(0.9200,1)" font-size="16.67" font-weight="400" fill="#222222">26</text></g>
<g><text transform="translate(59.60,691.70) scale(0.9200,1)" font-size="16.67" font-weight="400" fill="#222222">27</text></g>
<g><text transform="translate(59.60,715.70) scale(0.9200,1)" font-size="16.67" font-weight="400" fill="#222222">28</text></g>
<g><text transform="translate(59.60,739.70) scale(0.9200,1)" font-size="16.67" font-weight="400" fill="#222222">29</text></g>
<g><text transform="translate(59.60,763.70) scale(0.9200,1)" font-size="16.67" font-weight="400" fill="#222222">30</text></g>
<g><text transform="translate(59.60,787.70) scale(0.9200,1)" font-size="16.67" font-weight="400" fill="#222222">31</text></g>
<g><text transform="translate(59.60,811.70) scale(0.9200,1)" font-size="16.67" font-weight="400" fill="#222222">32</text></g>
<g><text transform="translate(59.60,835.70) scale(0.9200,1)" font-size="16.67" font-weight="400" fill="#222222">33</text></g>
<g><text transform="translate(59.60,859.70) scale(0.9200,1)" font-size="16.67" font-weight="400" fill="#222222">34</text></g>
<g><text transform="translate(59.60,883.70) scale(0.9200,1)" font-size="16.67" font-weight="400" fill="#222222">35</text></g>
<g><text transform="translate(59.60,913.70) scale(0.9200,1)" font-size="16.67" font-weight="400" fill="#222222">36</text></g>
<g><text transform="translate(59.60,937.70) scale(0.9200,1)" font-size="16.67" font-weight="400" fill="#222222">37</text></g>
<g clip-path="url(#clipRH)"><text transform="translate(59.60,961.70) scale(0.9200,1)" font-size="16.67" font-weight="400" fill="#222222">38</text></g>
<g><text transform="translate(474.40,336.80) scale(0.9542,1)" font-size="20.86" font-weight="700" fill="#ffffff">Transaction Date</text></g>
<g><text transform="translate(1027.40,336.90) scale(0.9360,1)" font-size="20.86" font-weight="700" fill="#ffffff">Construction Start</text></g>
<g><text transform="translate(370.28,366.60) scale(0.9655,1)" font-size="20.86" font-weight="700" fill="#ffffff">Period</text></g>
<g><text transform="translate(87.48,396.60) scale(0.9195,1)" font-size="20.86" font-weight="700" fill="#ffffff">Pro Forma Cash Flows</text></g>
<g><text transform="translate(370.88,396.60) scale(1.0175,1)" font-size="20.86" font-weight="700" fill="#ffffff">Date</text></g>
<g><text transform="translate(560.24,396.60) scale(0.9557,1)" font-size="20.86" font-weight="700" fill="#ffffff">1-Jun-20</text></g>
<g><text transform="translate(1119.39,396.60) scale(1.0072,1)" font-size="20.86" font-weight="700" fill="#ffffff">1-Oct-20</text></g>
<g><text transform="translate(622.90,366.60) scale(1.0455,1)" font-size="20.86" font-weight="700" fill="#ffffff">0</text></g>
<g><text transform="translate(1184.20,366.60) scale(0.9583,1)" font-size="20.86" font-weight="700" fill="#ffffff">4</text></g>
<g><text transform="translate(690.88,396.60) scale(0.9800,1)" font-size="20.86" font-weight="700" fill="#ffffff">1-Jul-20</text></g>
<g><text transform="translate(748.64,366.60) scale(0.9800,1)" font-size="20.86" font-weight="700" fill="#ffffff">1</text></g>
<g><text transform="translate(806.99,396.60) scale(0.9800,1)" font-size="20.86" font-weight="700" fill="#ffffff">1-Aug-20</text></g>
<g><text transform="translate(875.92,366.60) scale(0.9800,1)" font-size="20.86" font-weight="700" fill="#ffffff">2</text></g>
<g><text transform="translate(935.13,396.60) scale(0.9800,1)" font-size="20.86" font-weight="700" fill="#ffffff">1-Sep-20</text></g>
<g><text transform="translate(1001.82,366.60) scale(0.9800,1)" font-size="20.86" font-weight="700" fill="#ffffff">3</text></g>
<g><text transform="translate(1243.00,396.60) scale(0.9800,1)" font-size="20.86" font-weight="700" fill="#ffffff">1-Nov-20</text></g>
<g><text transform="translate(1309.84,366.60) scale(0.9800,1)" font-size="20.86" font-weight="700" fill="#ffffff">5</text></g>
<g><text transform="translate(1370.12,396.60) scale(0.9800,1)" font-size="20.86" font-weight="700" fill="#ffffff">1-Dec-20</text></g>
<g><text transform="translate(1436.82,366.60) scale(0.9800,1)" font-size="20.86" font-weight="700" fill="#ffffff">6</text></g>
<g><text transform="translate(1497.52,396.60) scale(0.9800,1)" font-size="20.86" font-weight="700" fill="#ffffff">1-Jan-21</text></g>
<g><text transform="translate(1562.92,366.60) scale(0.9800,1)" font-size="20.86" font-weight="700" fill="#ffffff">7</text></g>
<g><text transform="translate(1622.40,396.60) scale(0.9800,1)" font-size="20.86" font-weight="700" fill="#ffffff">1-Feb-21</text></g>
<g><text transform="translate(1688.92,366.60) scale(0.9800,1)" font-size="20.86" font-weight="700" fill="#ffffff">8</text></g>
<g><text transform="translate(1748.39,396.60) scale(0.9800,1)" font-size="20.86" font-weight="700" fill="#ffffff">1-Mar-21</text></g>
<g><text transform="translate(1814.92,366.60) scale(0.9800,1)" font-size="20.86" font-weight="700" fill="#ffffff">9</text></g>
<g clip-path="url(#clipN)"><text transform="translate(1875.54,396.60) scale(0.9800,1)" font-size="20.86" font-weight="700" fill="#ffffff">1-Apr-21</text></g>
<g><text transform="translate(87.96,421.50) scale(1.0369,1)" font-size="15.07" font-weight="400" fill="#000">Less:  50% Commissions</text></g>
<g><text transform="translate(87.93,445.50) scale(1.0721,1)" font-size="15.07" font-weight="400" fill="#000">Less:  Warranty</text></g>
<g><text transform="translate(89.00,469.50) scale(1.0543,1)" font-size="15.14" font-weight="700" fill="#000">Total Net Revenue</text></g>
<g><text transform="translate(88.05,546.80) scale(0.9539,1)" font-size="20.86" font-weight="700" fill="#ffffff">Development Costs</text></g>
<g><text transform="translate(87.92,595.60) scale(1.0773,1)" font-size="15.07" font-weight="400" fill="#000">Land Acquisition</text></g>
<g><text transform="translate(87.93,619.50) scale(1.0698,1)" font-size="15.07" font-weight="400" fill="#000">Pre-Construction Spending</text></g>
<g><text transform="translate(89.00,643.50) scale(1.0656,1)" font-size="15.07" font-weight="400" fill="#000">Construction Spending</text></g>
<g><text transform="translate(89.00,667.50) scale(1.0356,1)" font-size="15.14" font-weight="700" fill="#000">Total Development Costs</text></g>
<g><text transform="translate(88.30,715.50) scale(1.0617,1)" font-size="15.07" font-weight="400" font-style="italic" fill="#000">Cumulative Development Spend</text></g>
<g><text transform="translate(88.30,739.50) scale(1.0562,1)" font-size="15.07" font-weight="400" font-style="italic" fill="#000">Cumulative Development Spend post Financing</text></g>
<g><text transform="translate(88.30,787.50) scale(0.9959,1)" font-size="15.14" font-weight="700" fill="#000">Costs to Fund</text></g>
<g><text transform="translate(87.27,835.80) scale(1.0331,1)" font-size="15.14" font-weight="700" fill="#000">Proceeds to Payback Capital</text></g>
<g><text transform="translate(87.39,913.30) scale(0.9131,1)" font-size="21.43" font-weight="700" fill="#ffffff">Financing</text></g>
<g clip-path="url(#clipGrid)"><text transform="translate(87.19,961.50) scale(1.1077,1)" font-size="15.07" font-weight="400" fill="#000">Interest Rate</text></g>
<g><text transform="translate(428.40,421.90) scale(0.8071,1)" font-size="17.39" font-weight="400" fill="#0070c0">2.25%</text></g>
<g><text transform="translate(420.00,445.50) scale(0.8289,1)" font-size="17.39" font-weight="400" fill="#0070c0">$1,500</text></g>
<g><text transform="translate(385.86,595.80) scale(0.8352,1)" font-size="17.39" font-weight="400" fill="#0070c0">(14,000,000)</text></g>
<g><text transform="translate(397.98,619.60) scale(0.8350,1)" font-size="17.39" font-weight="400" fill="#0070c0">($400,000)</text></g>
<g><text transform="translate(377.81,643.60) scale(0.8350,1)" font-size="17.39" font-weight="400" fill="#0070c0">($14,615,000)</text></g>
<g><text transform="translate(378.30,667.50) scale(0.8420,1)" font-size="17.14" font-weight="700" fill="#000">($29,015,000)</text></g>
<g><text transform="translate(560.88,595.80) scale(0.8350,1)" font-size="17.39" font-weight="400" fill="#0070c0">(14,000,000)</text></g>
<g><text transform="translate(553.30,667.50) scale(0.8420,1)" font-size="17.14" font-weight="700" fill="#000">($14,100,000)</text></g>
<g><text transform="translate(550.30,715.50) scale(0.8305,1)" font-size="17.39" font-weight="400" font-style="italic" fill="#000">($14,100,000)</text></g>
<g><text transform="translate(550.35,739.50) scale(0.8300,1)" font-size="17.39" font-weight="400" font-style="italic" fill="#000">($14,092,708)</text></g>
<g><text transform="translate(553.30,787.50) scale(0.8420,1)" font-size="17.14" font-weight="700" fill="#0070c0">($14,100,000)</text></g>
<g><text transform="translate(616.99,421.50) scale(0.8350,1)" font-size="17.39" font-weight="400" fill="#0070c0">-</text></g>
<g><text transform="translate(616.99,445.50) scale(0.8350,1)" font-size="17.39" font-weight="400" fill="#0070c0">-</text></g>
<g><text transform="translate(622.90,469.60) scale(0.8420,1)" font-size="17.14" font-weight="700" fill="#000">$0</text></g>
<g><text transform="translate(623.40,835.80) scale(0.8420,1)" font-size="17.14" font-weight="700" fill="#0070c0">$0</text></g>
<g><text transform="translate(581.05,619.60) scale(0.8350,1)" font-size="17.39" font-weight="400" fill="#0070c0">(100,000)</text></g>
<g><text transform="translate(616.99,643.60) scale(0.8350,1)" font-size="17.39" font-weight="400" fill="#0070c0">-</text></g>
<g><text transform="translate(742.79,421.50) scale(0.8350,1)" font-size="17.39" font-weight="400" fill="#0070c0">-</text></g>
<g><text transform="translate(742.79,445.50) scale(0.8350,1)" font-size="17.39" font-weight="400" fill="#0070c0">-</text></g>
<g><text transform="translate(748.70,469.60) scale(0.8420,1)" font-size="17.14" font-weight="700" fill="#000">$0</text></g>
<g><text transform="translate(749.20,835.80) scale(0.8420,1)" font-size="17.14" font-weight="700" fill="#0070c0">$0</text></g>
<g><text transform="translate(742.79,595.60) scale(0.8350,1)" font-size="17.39" font-weight="400" fill="#0070c0">-</text></g>
<g><text transform="translate(707.35,619.60) scale(0.8350,1)" font-size="17.39" font-weight="400" fill="#0070c0">(100,000)</text></g>
<g><text transform="translate(742.79,643.60) scale(0.8350,1)" font-size="17.39" font-weight="400" fill="#0070c0">-</text></g>
<g><text transform="translate(699.65,667.50) scale(0.8420,1)" font-size="17.14" font-weight="700" fill="#000">($100,000)</text></g>
<g><text transform="translate(699.65,787.50) scale(0.8420,1)" font-size="17.14" font-weight="700" fill="#0070c0">($100,000)</text></g>
<g><text transform="translate(869.09,421.50) scale(0.8350,1)" font-size="17.39" font-weight="400" fill="#0070c0">-</text></g>
<g><text transform="translate(869.09,445.50) scale(0.8350,1)" font-size="17.39" font-weight="400" fill="#0070c0">-</text></g>
<g><text transform="translate(875.00,469.60) scale(0.8420,1)" font-size="17.14" font-weight="700" fill="#000">$0</text></g>
<g><text transform="translate(875.50,835.80) scale(0.8420,1)" font-size="17.14" font-weight="700" fill="#0070c0">$0</text></g>
<g><text transform="translate(869.09,595.60) scale(0.8350,1)" font-size="17.39" font-weight="400" fill="#0070c0">-</text></g>
<g><text transform="translate(833.65,619.60) scale(0.8350,1)" font-size="17.39" font-weight="400" fill="#0070c0">(100,000)</text></g>
<g><text transform="translate(869.09,643.60) scale(0.8350,1)" font-size="17.39" font-weight="400" fill="#0070c0">-</text></g>
<g><text transform="translate(825.95,667.50) scale(0.8420,1)" font-size="17.14" font-weight="700" fill="#000">($100,000)</text></g>
<g><text transform="translate(825.95,787.50) scale(0.8420,1)" font-size="17.14" font-weight="700" fill="#0070c0">($100,000)</text></g>
<g><text transform="translate(994.99,421.50) scale(0.8350,1)" font-size="17.39" font-weight="400" fill="#0070c0">-</text></g>
<g><text transform="translate(994.99,445.50) scale(0.8350,1)" font-size="17.39" font-weight="400" fill="#0070c0">-</text></g>
<g><text transform="translate(1000.90,469.60) scale(0.8420,1)" font-size="17.14" font-weight="700" fill="#000">$0</text></g>
<g><text transform="translate(1001.40,835.80) scale(0.8420,1)" font-size="17.14" font-weight="700" fill="#0070c0">$0</text></g>
<g><text transform="translate(994.99,595.60) scale(0.8350,1)" font-size="17.39" font-weight="400" fill="#0070c0">-</text></g>
<g><text transform="translate(959.55,619.60) scale(0.8350,1)" font-size="17.39" font-weight="400" fill="#0070c0">(100,000)</text></g>
<g><text transform="translate(994.99,643.60) scale(0.8350,1)" font-size="17.39" font-weight="400" fill="#0070c0">-</text></g>
<g><text transform="translate(951.85,667.50) scale(0.8420,1)" font-size="17.14" font-weight="700" fill="#000">($100,000)</text></g>
<g><text transform="translate(951.85,787.50) scale(0.8420,1)" font-size="17.14" font-weight="700" fill="#0070c0">($100,000)</text></g>
<g><text transform="translate(1177.99,421.50) scale(0.8350,1)" font-size="17.39" font-weight="400" fill="#0070c0">-</text></g>
<g><text transform="translate(1177.99,445.50) scale(0.8350,1)" font-size="17.39" font-weight="400" fill="#0070c0">-</text></g>
<g><text transform="translate(1183.90,469.60) scale(0.8420,1)" font-size="17.14" font-weight="700" fill="#000">$0</text></g>
<g><text transform="translate(1184.40,835.80) scale(0.8420,1)" font-size="17.14" font-weight="700" fill="#0070c0">$0</text></g>
<g><text transform="translate(1177.99,595.60) scale(0.8350,1)" font-size="17.39" font-weight="400" fill="#0070c0">-</text></g>
<g><text transform="translate(1177.99,619.60) scale(0.8350,1)" font-size="17.39" font-weight="400" fill="#0070c0">-</text></g>
<g><text transform="translate(1142.35,643.60) scale(0.8350,1)" font-size="17.39" font-weight="400" fill="#0070c0">(974,333)</text></g>
<g><text transform="translate(1134.65,667.50) scale(0.8420,1)" font-size="17.14" font-weight="700" fill="#000">($974,333)</text></g>
<g><text transform="translate(1134.65,787.50) scale(0.8420,1)" font-size="17.14" font-weight="700" fill="#0070c0">($974,333)</text></g>
<g><text transform="translate(1303.99,421.50) scale(0.8350,1)" font-size="17.39" font-weight="400" fill="#0070c0">-</text></g>
<g><text transform="translate(1303.99,445.50) scale(0.8350,1)" font-size="17.39" font-weight="400" fill="#0070c0">-</text></g>
<g><text transform="translate(1309.90,469.60) scale(0.8420,1)" font-size="17.14" font-weight="700" fill="#000">$0</text></g>
<g><text transform="translate(1310.40,835.80) scale(0.8420,1)" font-size="17.14" font-weight="700" fill="#0070c0">$0</text></g>
<g><text transform="translate(1303.99,595.60) scale(0.8350,1)" font-size="17.39" font-weight="400" fill="#0070c0">-</text></g>
<g><text transform="translate(1303.99,619.60) scale(0.8350,1)" font-size="17.39" font-weight="400" fill="#0070c0">-</text></g>
<g><text transform="translate(1268.35,643.60) scale(0.8350,1)" font-size="17.39" font-weight="400" fill="#0070c0">(974,333)</text></g>
<g><text transform="translate(1260.65,667.50) scale(0.8420,1)" font-size="17.14" font-weight="700" fill="#000">($974,333)</text></g>
<g><text transform="translate(1260.65,787.50) scale(0.8420,1)" font-size="17.14" font-weight="700" fill="#0070c0">($974,333)</text></g>
<g><text transform="translate(1429.99,421.50) scale(0.8350,1)" font-size="17.39" font-weight="400" fill="#0070c0">-</text></g>
<g><text transform="translate(1429.99,445.50) scale(0.8350,1)" font-size="17.39" font-weight="400" fill="#0070c0">-</text></g>
<g><text transform="translate(1435.90,469.60) scale(0.8420,1)" font-size="17.14" font-weight="700" fill="#000">$0</text></g>
<g><text transform="translate(1436.40,835.80) scale(0.8420,1)" font-size="17.14" font-weight="700" fill="#0070c0">$0</text></g>
<g><text transform="translate(1429.99,595.60) scale(0.8350,1)" font-size="17.39" font-weight="400" fill="#0070c0">-</text></g>
<g><text transform="translate(1429.99,619.60) scale(0.8350,1)" font-size="17.39" font-weight="400" fill="#0070c0">-</text></g>
<g><text transform="translate(1394.35,643.60) scale(0.8350,1)" font-size="17.39" font-weight="400" fill="#0070c0">(974,333)</text></g>
<g><text transform="translate(1386.65,667.50) scale(0.8420,1)" font-size="17.14" font-weight="700" fill="#000">($974,333)</text></g>
<g><text transform="translate(1386.65,787.50) scale(0.8420,1)" font-size="17.14" font-weight="700" fill="#0070c0">($974,333)</text></g>
<g><text transform="translate(1556.09,421.50) scale(0.8350,1)" font-size="17.39" font-weight="400" fill="#0070c0">-</text></g>
<g><text transform="translate(1556.09,445.50) scale(0.8350,1)" font-size="17.39" font-weight="400" fill="#0070c0">-</text></g>
<g><text transform="translate(1562.00,469.60) scale(0.8420,1)" font-size="17.14" font-weight="700" fill="#000">$0</text></g>
<g><text transform="translate(1562.50,835.80) scale(0.8420,1)" font-size="17.14" font-weight="700" fill="#0070c0">$0</text></g>
<g><text transform="translate(1556.09,595.60) scale(0.8350,1)" font-size="17.39" font-weight="400" fill="#0070c0">-</text></g>
<g><text transform="translate(1556.09,619.60) scale(0.8350,1)" font-size="17.39" font-weight="400" fill="#0070c0">-</text></g>
<g><text transform="translate(1520.45,643.60) scale(0.8350,1)" font-size="17.39" font-weight="400" fill="#0070c0">(974,333)</text></g>
<g><text transform="translate(1512.75,667.50) scale(0.8420,1)" font-size="17.14" font-weight="700" fill="#000">($974,333)</text></g>
<g><text transform="translate(1512.75,787.50) scale(0.8420,1)" font-size="17.14" font-weight="700" fill="#0070c0">($974,333)</text></g>
<g><text transform="translate(1682.09,421.50) scale(0.8350,1)" font-size="17.39" font-weight="400" fill="#0070c0">-</text></g>
<g><text transform="translate(1682.09,445.50) scale(0.8350,1)" font-size="17.39" font-weight="400" fill="#0070c0">-</text></g>
<g><text transform="translate(1688.00,469.60) scale(0.8420,1)" font-size="17.14" font-weight="700" fill="#000">$0</text></g>
<g><text transform="translate(1688.50,835.80) scale(0.8420,1)" font-size="17.14" font-weight="700" fill="#0070c0">$0</text></g>
<g><text transform="translate(1682.09,595.60) scale(0.8350,1)" font-size="17.39" font-weight="400" fill="#0070c0">-</text></g>
<g><text transform="translate(1682.09,619.60) scale(0.8350,1)" font-size="17.39" font-weight="400" fill="#0070c0">-</text></g>
<g><text transform="translate(1646.45,643.60) scale(0.8350,1)" font-size="17.39" font-weight="400" fill="#0070c0">(974,333)</text></g>
<g><text transform="translate(1638.75,667.50) scale(0.8420,1)" font-size="17.14" font-weight="700" fill="#000">($974,333)</text></g>
<g><text transform="translate(1638.75,787.50) scale(0.8420,1)" font-size="17.14" font-weight="700" fill="#0070c0">($974,333)</text></g>
<g><text transform="translate(1808.09,421.50) scale(0.8350,1)" font-size="17.39" font-weight="400" fill="#0070c0">-</text></g>
<g><text transform="translate(1808.09,445.50) scale(0.8350,1)" font-size="17.39" font-weight="400" fill="#0070c0">-</text></g>
<g><text transform="translate(1814.00,469.60) scale(0.8420,1)" font-size="17.14" font-weight="700" fill="#000">$0</text></g>
<g><text transform="translate(1814.50,835.80) scale(0.8420,1)" font-size="17.14" font-weight="700" fill="#0070c0">$0</text></g>
<g><text transform="translate(1808.09,595.60) scale(0.8350,1)" font-size="17.39" font-weight="400" fill="#0070c0">-</text></g>
<g><text transform="translate(1808.09,619.60) scale(0.8350,1)" font-size="17.39" font-weight="400" fill="#0070c0">-</text></g>
<g><text transform="translate(1772.45,643.60) scale(0.8350,1)" font-size="17.39" font-weight="400" fill="#0070c0">(974,333)</text></g>
<g><text transform="translate(1764.75,667.50) scale(0.8420,1)" font-size="17.14" font-weight="700" fill="#000">($974,333)</text></g>
<g><text transform="translate(1764.75,787.50) scale(0.8420,1)" font-size="17.14" font-weight="700" fill="#0070c0">($974,333)</text></g>
<g clip-path="url(#clipN)"><text transform="translate(1890.75,667.50) scale(0.8420,1)" font-size="17.14" font-weight="700" fill="#000">($974,333)</text></g>
<g clip-path="url(#clipN)"><text transform="translate(1890.75,787.50) scale(0.8420,1)" font-size="17.14" font-weight="700" fill="#0070c0">($974,333)</text></g>
<g><text transform="translate(117.00,978.20) scale(1.0029,1)" font-size="16.81" font-weight="400" fill="#444">Deal Summary</text></g>
<g><text transform="translate(256.00,978.20) scale(1.0006,1)" font-size="16.57" font-weight="700" fill="#217346">Monthly Cash Flows</text></g>
<g><text transform="translate(441.00,978.20) scale(1.0108,1)" font-size="16.81" font-weight="400" fill="#444">Cap Rate &amp; NOI</text></g>
<g><text transform="translate(591.00,978.20) scale(0.9993,1)" font-size="16.81" font-weight="400" fill="#444">Land Loan</text></g>
<g><text transform="translate(701.00,978.20) scale(1.0341,1)" font-size="16.81" font-weight="400" fill="#444">Construction Loan Amount</text></g>
<g><text transform="translate(16.50,1015.00) scale(0.9338,1)" font-size="13.04" font-weight="400" fill="#444">Calculate</text></g>
<g><text transform="translate(1872.00,1015.00) scale(0.9296,1)" font-size="12.75" font-weight="400" fill="#444">100%</text></g>
<g><text transform="translate(110.00,1062.00) scale(0.9687,1)" font-size="19.13" font-weight="400" fill="#333">Type here to search</text></g>
<g><text transform="translate(1777.00,1048.70) scale(1.0011,1)" font-size="14.49" font-weight="400" fill="#fff">10:54 PM</text></g>
<g><text transform="translate(1769.00,1071.40) scale(1.0181,1)" font-size="15.22" font-weight="400" fill="#fff">06/16/2020</text></g>
<g><text transform="translate(1884.50,1069.00) scale(1.0000,1)" font-size="13.77" font-weight="400" fill="#fff">1</text></g></svg>
</body></html>
